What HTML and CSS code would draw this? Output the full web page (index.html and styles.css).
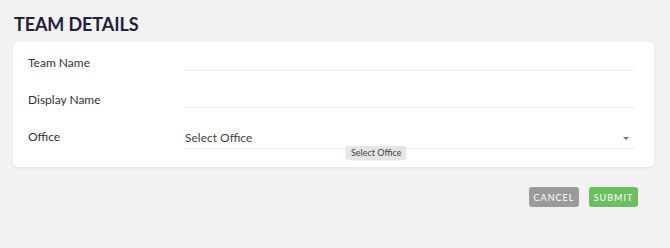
FILE: index.html
```html
<!DOCTYPE html>
<html lang="en">

<head>
    <meta charset="UTF-8">
    <meta name="viewport" content="width=device-width, initial-scale=1.0">
    <title>Team Details</title>
    <link rel="stylesheet" href="styles.css">
</head>

<body>
    <div class="page">
        <h1 class="page-title">TEAM DETAILS</h1>

        <div class="card">
            <div class="form-row">
                <label class="form-label">Team Name</label>
                <div class="form-field">
                    <input type="text" class="text-input">
                </div>
            </div>

            <div class="form-row">
                <label class="form-label">Display Name</label>
                <div class="form-field">
                    <input type="text" class="text-input">
                </div>
            </div>

            <div class="form-row">
                <label class="form-label">Office</label>
                <div class="form-field select-field">
                    <span class="select-value">Select Office</span>
                    <span class="select-arrow"></span>
                    <div class="tooltip">Select Office</div>
                </div>
            </div>
        </div>

        <div class="actions">
            <button class="btn btn-cancel">CANCEL</button>
            <button class="btn btn-submit">SUBMIT</button>
        </div>
    </div>
</body>

</html>
```

FILE: styles.css
```css
* {
    margin: 0;
    padding: 0;
    box-sizing: border-box;
}

body {
    font-family: Lato, 'Noto Sans', Arial, sans-serif;
    background: #f2f2f2;
    color: #333;
}

.page {
    padding: 12px 16px 0 13px;
}

.page-title {
    font-size: 18px;
    font-weight: 700;
    line-height: 24px;
    letter-spacing: -0.1px;
    color: #22213a;
    padding-left: 1px;
    margin-bottom: 6px;
}

.card {
    background: #fff;
    border-radius: 5px;
    box-shadow: 0 1px 3px rgba(0, 0, 0, 0.08);
    padding: 2px 20px 12px 15px;
}

.form-row {
    display: flex;
    align-items: center;
    height: 37px;
}

.form-label {
    width: 157px;
    font-size: 12px;
    line-height: 16px;
    color: #333;
}

.form-field {
    flex: 1;
    position: relative;
    border-bottom: 1px solid #ededed;
}

.text-input {
    display: block;
    width: 100%;
    height: 15px;
    border: none;
    outline: none;
    background: transparent;
}

.select-field {
    display: flex;
    align-items: center;
    justify-content: space-between;
    height: 24px;
    padding-top: 2px;
    padding-bottom: 0;
}

.select-value {
    font-size: 12px;
    color: #444;
}

.select-arrow {
    width: 0;
    height: 0;
    border-left: 3px solid transparent;
    border-right: 3px solid transparent;
    border-top: 3px solid #777;
    margin-right: 5px;
    margin-top: 3px;
}

.tooltip {
    position: absolute;
    left: 161px;
    top: 21px;
    padding: 0 5px;
    height: 13px;
    line-height: 13px;
    font-size: 9px;
    color: #444;
    background: #e6e6e6;
    border-radius: 2px;
    box-shadow: 0 1px 2px rgba(0, 0, 0, 0.15);
}

.actions {
    display: flex;
    justify-content: flex-end;
    gap: 10px;
    margin-top: 20px;
    padding-right: 16px;
}

.btn {
    height: 20px;
    padding: 0;
    border: none;
    border-radius: 3px;
    color: #fff;
    font-family: inherit;
    font-size: 9px;
    font-weight: 400;
    letter-spacing: 1px;
    cursor: pointer;
}

.btn-cancel {
    width: 50px;
    background: #9b9b9b;
}

.btn-submit {
    width: 49px;
    background: #6cbf61;
}
```
